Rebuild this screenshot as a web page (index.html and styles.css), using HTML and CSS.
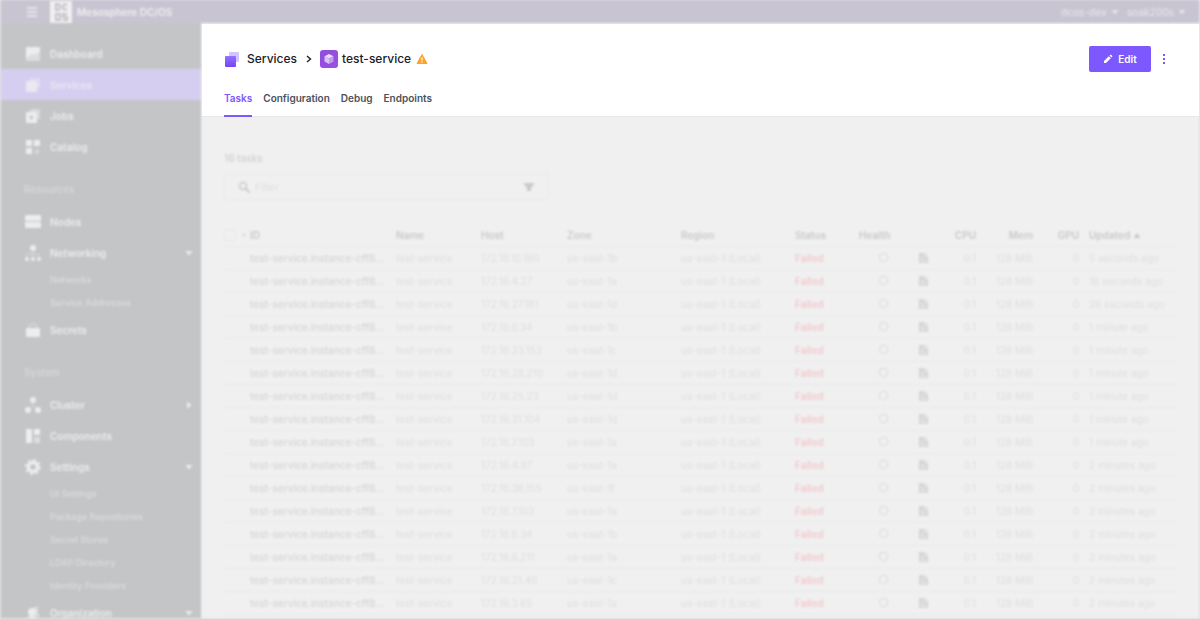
FILE: index.html
```html
<!DOCTYPE html>
<html lang="en">
<head>
<meta charset="utf-8">
<title>test-service - Mesosphere DC/OS</title>
<link rel="stylesheet" href="styles.css">
</head>
<body>
<svg class="sprite" aria-hidden="true">
  <symbol id="caret" viewBox="0 0 8 8"><path d="M0.500 2h7L4 6.500z"/></symbol>
  <symbol id="health" viewBox="0 0 12 12"><circle cx="6" cy="6" r="4.500" fill="none" stroke="currentColor" stroke-width="1.300" stroke-dasharray="2.200 0.600"/></symbol>
  <symbol id="log" viewBox="0 0 12 12"><path fill-rule="evenodd" d="M1 1h6v4h4v7H1zM3 6v1h3V6zM3 9v1h6V9z"/><path d="M8 1l3 3H8z"/></symbol>
  <symbol id="services" viewBox="0 0 16 16"><path opacity=".5" d="M5 1h10v10h-3V4H5z"/><rect x="1" y="4" width="11" height="11" rx="1"/></symbol>
</svg>
<div class="page">
  <div class="backdrop">
    <div class="topbar">
      <button class="menu" aria-label="Menu"><svg width="10" height="12" viewBox="0 0 10 12"><path d="M0 1h10v2H0zM0 5h10v2H0zM0 9h10v2H0z"/></svg></button>
      <svg class="logo" width="22" height="22" viewBox="0 0 22 22"><rect width="22" height="22" fill="#f0f0f0"/><g fill="none" stroke="#c4c1ca" stroke-width="2"><path d="M6 3h2q2 0 2 3t-2 3H6zM17 4q-4-2-4 2t4 2M6 13h4v6H6zM17 13h-4v3h4v3h-4"/></g></svg>
      <span class="brand">Mesosphere DC/OS</span>
      <button class="account">dcos-dev <svg class="caret"><use href="#caret"/></svg></button>
      <button class="account">soak200s <svg class="caret"><use href="#caret"/></svg></button>
    </div>
    <div class="shell">
      <nav class="sidebar">
        <a class="item" href="#"><svg class="icon" viewBox="0 0 16 16"><path d="M1 1h14v5L10 9 7 8 1 13z"/><path opacity=".6" d="M1 13l6-5 3 1 5-3v9H1z"/></svg>Dashboard</a>
        <a class="item active" href="#"><svg class="icon"><use href="#services"/></svg>Services</a>
        <a class="item" href="#"><svg class="icon" viewBox="0 0 16 16"><path opacity=".5" d="M5 1h10v10h-3V4H5z"/><path fill-rule="evenodd" d="M1 4h11v11H1zM5 7v5l4-2.500z"/></svg>Jobs</a>
        <a class="item" href="#"><svg class="icon" viewBox="0 0 16 16"><path d="M1 1h6v6H1zM9 1h6v6H9zM1 9h6v6H1z"/><path opacity=".6" d="M11 10h2v2h2v1h-2v2h-2v-2H9v-1h2z"/></svg>Catalog</a>
        <h2 class="group">Resources</h2>
        <a class="item" href="#"><svg class="icon" viewBox="0 0 16 16"><rect y="1" width="16" height="6" rx="1"/><rect y="8" width="16" height="6" rx="1"/></svg>Nodes</a>
        <a class="item" href="#"><svg class="icon" viewBox="0 0 16 16"><circle cx="8" cy="3" r="3"/><circle cx="2" cy="14" r="2"/><circle cx="8" cy="14" r="2"/><circle cx="14" cy="14" r="2"/><path opacity=".5" fill="none" stroke="currentColor" d="M8 5v8M2 13V9h12v4"/></svg>Networking<svg class="caret"><use href="#caret"/></svg></a>
        <a class="sub" href="#">Networks</a>
        <a class="sub" href="#">Service Addresses</a>
        <a class="item" href="#"><svg class="icon" viewBox="0 0 16 16"><rect x="1" y="6" width="14" height="9" rx="1"/><path opacity=".5" fill="none" stroke="currentColor" stroke-width="1.500" d="M4 6q0-4 4-4t4 4"/></svg>Secrets</a>
        <h2 class="group">System</h2>
        <a class="item" href="#"><svg class="icon" viewBox="0 0 16 16"><circle cx="8" cy="3" r="3"/><circle cx="3" cy="13" r="3"/><circle cx="13" cy="13" r="3"/><path opacity=".5" fill="none" stroke="currentColor" d="M8 4v5l-5 4M8 9l5 4"/></svg>Cluster<svg class="caret closed"><use href="#caret"/></svg></a>
        <a class="item" href="#"><svg class="icon" viewBox="0 0 16 16"><path d="M1 1h6v14H1zM9 1h6v6H9z"/><path opacity=".6" d="M9 9h6v6H9z"/></svg>Components</a>
        <a class="item" href="#"><svg class="icon" viewBox="0 0 16 16"><circle cx="8" cy="8" r="4.500" fill="none" stroke="currentColor" stroke-width="3.500"/><circle cx="8" cy="8" r="7" fill="none" stroke="currentColor" stroke-width="2" stroke-dasharray="2.750 2.750"/></svg>Settings<svg class="caret"><use href="#caret"/></svg></a>
        <a class="sub" href="#">UI Settings</a>
        <a class="sub" href="#">Package Repositories</a>
        <a class="sub" href="#">Secret Stores</a>
        <a class="sub" href="#">LDAP Directory</a>
        <a class="sub" href="#">Identity Providers</a>
        <a class="item" href="#"><svg class="icon" viewBox="0 0 16 16"><circle cx="7" cy="7" r="4"/><path d="M1 16q0-5 6-5t6 5z"/><path opacity=".6" d="M8 3l5-2v7l2 4h-4z"/></svg>Organization<svg class="caret"><use href="#caret"/></svg></a>
      </nav>
      <main class="content">
        <div class="count">16 tasks</div>
        <label class="filter">
          <svg width="12" height="12" viewBox="0 0 12 12"><circle cx="5" cy="5" r="3.500" fill="none" stroke="currentColor" stroke-width="1.500"/><path stroke="currentColor" stroke-width="2" d="M7.500 7.500l4 4"/></svg>
          <input type="text" placeholder="Filter" aria-label="Filter">
          <svg width="12" height="10" viewBox="0 0 12 10"><path d="M1 1h10v1L8 6v3H4V6L1 2z"/></svg>
        </label>
        <table class="tasks">
          <colgroup><col class="c-check"><col class="c-id"><col class="c-name"><col class="c-host"><col class="c-zone"><col class="c-region"><col class="c-status"><col class="c-health"><col class="c-log"><col class="c-cpu"><col class="c-mem"><col class="c-gpu"><col></colgroup>
          <thead><tr><th><span class="select"><input type="checkbox" aria-label="Select all tasks"><svg width="4" height="4" viewBox="0 0 8 8"><use href="#caret"/></svg></span></th><th>ID</th><th>Name</th><th>Host</th><th>Zone</th><th>Region</th><th>Status</th><th>Health</th><th></th><th>CPU</th><th>Mem</th><th>GPU</th><th>Updated <svg class="sort" viewBox="0 0 8 8"><path d="M0.500 7h7L4 2z"/></svg></th></tr></thead>
          <tbody>
            <tr><td></td><td>test-service.instance-cff8...</td><td>test-service</td><td>172.16.10.180</td><td>us-east-1b</td><td>us-east-1 (Local)</td><td>Failed</td><td><svg><use href="#health"/></svg></td><td><svg><use href="#log"/></svg></td><td>0.1</td><td>128 MiB</td><td>0</td><td>5 seconds ago</td></tr>
            <tr><td></td><td>test-service.instance-cff8...</td><td>test-service</td><td>172.16.4.27</td><td>us-east-1a</td><td>us-east-1 (Local)</td><td>Failed</td><td><svg><use href="#health"/></svg></td><td><svg><use href="#log"/></svg></td><td>0.1</td><td>128 MiB</td><td>0</td><td>16 seconds ago</td></tr>
            <tr><td></td><td>test-service.instance-cff8...</td><td>test-service</td><td>172.16.27.181</td><td>us-east-1d</td><td>us-east-1 (Local)</td><td>Failed</td><td><svg><use href="#health"/></svg></td><td><svg><use href="#log"/></svg></td><td>0.1</td><td>128 MiB</td><td>0</td><td>26 seconds ago</td></tr>
            <tr><td></td><td>test-service.instance-cff8...</td><td>test-service</td><td>172.16.6.34</td><td>us-east-1b</td><td>us-east-1 (Local)</td><td>Failed</td><td><svg><use href="#health"/></svg></td><td><svg><use href="#log"/></svg></td><td>0.1</td><td>128 MiB</td><td>0</td><td>1 minute ago</td></tr>
            <tr><td></td><td>test-service.instance-cff8...</td><td>test-service</td><td>172.16.23.153</td><td>us-east-1c</td><td>us-east-1 (Local)</td><td>Failed</td><td><svg><use href="#health"/></svg></td><td><svg><use href="#log"/></svg></td><td>0.1</td><td>128 MiB</td><td>0</td><td>1 minute ago</td></tr>
            <tr><td></td><td>test-service.instance-cff8...</td><td>test-service</td><td>172.16.26.210</td><td>us-east-1d</td><td>us-east-1 (Local)</td><td>Failed</td><td><svg><use href="#health"/></svg></td><td><svg><use href="#log"/></svg></td><td>0.1</td><td>128 MiB</td><td>0</td><td>1 minute ago</td></tr>
            <tr><td></td><td>test-service.instance-cff8...</td><td>test-service</td><td>172.16.25.23</td><td>us-east-1d</td><td>us-east-1 (Local)</td><td>Failed</td><td><svg><use href="#health"/></svg></td><td><svg><use href="#log"/></svg></td><td>0.1</td><td>128 MiB</td><td>0</td><td>1 minute ago</td></tr>
            <tr><td></td><td>test-service.instance-cff8...</td><td>test-service</td><td>172.16.31.104</td><td>us-east-1d</td><td>us-east-1 (Local)</td><td>Failed</td><td><svg><use href="#health"/></svg></td><td><svg><use href="#log"/></svg></td><td>0.1</td><td>128 MiB</td><td>0</td><td>1 minute ago</td></tr>
            <tr><td></td><td>test-service.instance-cff8...</td><td>test-service</td><td>172.16.7.103</td><td>us-east-1a</td><td>us-east-1 (Local)</td><td>Failed</td><td><svg><use href="#health"/></svg></td><td><svg><use href="#log"/></svg></td><td>0.1</td><td>128 MiB</td><td>0</td><td>1 minute ago</td></tr>
            <tr><td></td><td>test-service.instance-cff8...</td><td>test-service</td><td>172.16.4.87</td><td>us-east-1a</td><td>us-east-1 (Local)</td><td>Failed</td><td><svg><use href="#health"/></svg></td><td><svg><use href="#log"/></svg></td><td>0.1</td><td>128 MiB</td><td>0</td><td>2 minutes ago</td></tr>
            <tr><td></td><td>test-service.instance-cff8...</td><td>test-service</td><td>172.16.38.155</td><td>us-east-1f</td><td>us-east-1 (Local)</td><td>Failed</td><td><svg><use href="#health"/></svg></td><td><svg><use href="#log"/></svg></td><td>0.1</td><td>128 MiB</td><td>0</td><td>2 minutes ago</td></tr>
            <tr><td></td><td>test-service.instance-cff8...</td><td>test-service</td><td>172.16.7.103</td><td>us-east-1a</td><td>us-east-1 (Local)</td><td>Failed</td><td><svg><use href="#health"/></svg></td><td><svg><use href="#log"/></svg></td><td>0.1</td><td>128 MiB</td><td>0</td><td>2 minutes ago</td></tr>
            <tr><td></td><td>test-service.instance-cff8...</td><td>test-service</td><td>172.16.6.34</td><td>us-east-1b</td><td>us-east-1 (Local)</td><td>Failed</td><td><svg><use href="#health"/></svg></td><td><svg><use href="#log"/></svg></td><td>0.1</td><td>128 MiB</td><td>0</td><td>2 minutes ago</td></tr>
            <tr><td></td><td>test-service.instance-cff8...</td><td>test-service</td><td>172.16.6.211</td><td>us-east-1a</td><td>us-east-1 (Local)</td><td>Failed</td><td><svg><use href="#health"/></svg></td><td><svg><use href="#log"/></svg></td><td>0.1</td><td>128 MiB</td><td>0</td><td>2 minutes ago</td></tr>
            <tr><td></td><td>test-service.instance-cff8...</td><td>test-service</td><td>172.16.21.46</td><td>us-east-1c</td><td>us-east-1 (Local)</td><td>Failed</td><td><svg><use href="#health"/></svg></td><td><svg><use href="#log"/></svg></td><td>0.1</td><td>128 MiB</td><td>0</td><td>2 minutes ago</td></tr>
            <tr><td></td><td>test-service.instance-cff8...</td><td>test-service</td><td>172.16.3.65</td><td>us-east-1a</td><td>us-east-1 (Local)</td><td>Failed</td><td><svg><use href="#health"/></svg></td><td><svg><use href="#log"/></svg></td><td>0.1</td><td>128 MiB</td><td>0</td><td>2 minutes ago</td></tr>
          </tbody>
        </table>
      </main>
    </div>
  </div>
  <header class="header">
    <div class="title-row">
      <svg width="16" height="16" viewBox="0 0 16 16"><defs><linearGradient id="g" x1="0" y1="0" x2="0" y2="1"><stop offset="0" stop-color="#9471ff"/><stop offset="1" stop-color="#7545f5"/></linearGradient></defs><rect x="5" y="1" width="10" height="10" rx="1" fill="#d3c5ff"/><rect x="1" y="5" width="11" height="11" rx="1" fill="url(#g)"/></svg>
      <a class="crumb" href="#">Services</a>
      <svg class="chevron" width="6" height="8" viewBox="0 0 6 8"><path d="M1 1l3.500 3L1 7" fill="none" stroke="#1b2029" stroke-width="1.400"/></svg>
      <svg class="app-icon" width="18" height="18" viewBox="0 0 18 18"><defs><linearGradient id="b" x1="0" y1="0" x2="1" y2="1"><stop offset="0" stop-color="#8f4be0"/><stop offset="1" stop-color="#9b50e0"/></linearGradient></defs><rect width="18" height="18" rx="3" fill="url(#b)"/><path d="M9 4l4.500 2.200L9 8.500 4.500 6.200z" fill="#eadcfa"/><path d="M4.500 6.200L9 8.500V14l-4.500-2.500z" fill="#d9bff5"/><path d="M13.500 6.200L9 8.500V14l4.500-2.500z" fill="#c29cee"/></svg>
      <a class="crumb service" href="#">test-service</a>
      <svg width="12" height="12" viewBox="0 0 12 12"><path d="M6 1.500l5 9H1z" fill="#ffa22d" stroke="#ffa22d" stroke-linejoin="round"/><path d="M5.400 4.500h1.200v3H5.400zM5.400 8.500h1.200v1.200H5.400z" fill="#fff"/></svg>
      <button class="edit"><svg width="10" height="10" viewBox="0 0 10 10"><path fill="#fff" d="M1 7l4.800-4.800 2 2L3 9H1zM6.500 1.500l.8-.7q.4-.3.800 0l1.100 1.100q.3.400 0 .8l-.7.800z"/></svg>Edit</button>
      <button class="more" aria-label="More actions"><svg width="4" height="10" viewBox="0 0 4 10"><path fill="#7d58ff" d="M1 0h2v2H1zM1 4h2v2H1zM1 8h2v2H1z"/></svg></button>
    </div>
    <nav class="tabs">
      <a class="tab current" href="#">Tasks</a>
      <a class="tab" href="#">Configuration</a>
      <a class="tab" href="#">Debug</a>
      <a class="tab" href="#">Endpoints</a>
    </nav>
  </header>
</div>
</body>
</html>
```

FILE: styles.css
```css
* { box-sizing: border-box; }

body {
  margin: 0;
  background: #e2e2e5;
  font-family: Inter, "Liberation Sans", sans-serif;
  font-size: 10px;
  line-height: 16px;
}

a { color: inherit; text-decoration: none; }
button { border: 0; padding: 0; background: none; color: inherit; font: inherit; }
svg { flex: none; fill: currentColor; }
.sprite { position: absolute; width: 0; height: 0; }

.page { display: grid; height: 100vh; overflow: hidden; }
.backdrop, .header { grid-area: 1 / 1; }

/* Dimmed, out-of-focus application behind the header */
.backdrop {
  display: flex;
  flex-direction: column;
  min-height: 0;
  margin: 0 1px 1px;
  overflow: hidden;
  background: #f0f0f0;
  filter: blur(1px);
}

.topbar {
  display: flex;
  flex: none;
  align-items: center;
  height: 23px;
  padding: 0 13px 0 26px;
  background: #c8c4d2;
  color: #e6e4ea;
}
.menu { display: flex; }
.logo { margin-left: 13px; }
.brand { margin: 0 auto 0 5px; color: #f0f0f0; font-weight: 600; }
.account { display: flex; align-items: center; gap: 4px; margin-left: 8px; font-weight: 500; }
.caret { width: 8px; height: 8px; }

.shell { display: flex; flex: 1; min-height: 0; }

.sidebar {
  flex: none;
  width: 200px;
  padding-top: 15px;
  overflow: hidden;
  background: #c4c5c7;
  color: #ededee;
}
.item { display: flex; align-items: center; height: 31px; padding: 0 8px 0 24px; font-weight: 600; }
.item .icon { width: 16px; height: 16px; margin-right: 9px; }
.item .caret { margin-left: auto; }
.item .closed { transform: rotate(-90deg); }
.active { background: #d6cef0; color: #ebe8f2; }
.group { margin: 0; padding: 12px 23px 0; height: 44px; color: #d8d9da; font-size: 10px; font-weight: 500; line-height: 31px; }
.sub { display: block; padding-left: 49px; color: #dcddde; font-size: 9px; font-weight: 500; line-height: 23px; }

.content { flex: 1; min-width: 0; padding: 127px 22px 0 23px; color: #dedede; }
.count { color: #cfcfcf; font-weight: 500; }
.filter {
  display: flex;
  align-items: center;
  width: 325px;
  height: 27px;
  margin-top: 7px;
  padding: 0 13px;
  border: 1px solid #e9e9e9;
  border-radius: 2px;
  color: #cacaca;
}
.filter input { flex: 1; min-width: 0; border: 0; padding: 0 5px; background: none; font: inherit; }
.filter input::placeholder { color: #dedede; opacity: 1; }

.tasks { width: 100%; margin-top: 24px; border-collapse: collapse; table-layout: fixed; white-space: nowrap; }
.tasks tr { border-bottom: 1px solid #e9e9e9; }
.tasks th, .tasks td { height: 23px; padding: 0; font-weight: 400; line-height: 12px; text-align: left; }
.tasks th { height: 22px; color: #c9c9c9; font-weight: 600; }
.tasks tr > :nth-child(n+10):nth-child(-n+12) { text-align: right; }
.tasks tr > :nth-child(13) { padding-left: 10px; }
.tasks td:nth-child(2) { color: #d5d5d5; font-weight: 500; }
.tasks td:nth-child(7) { color: #f3c9cd; font-weight: 600; }
.tasks td:nth-child(8) { text-align: center; color: #dadada; }
.tasks td:nth-child(9) { text-align: center; color: #d6d6d6; }
.tasks td svg { display: block; width: 11px; height: 11px; margin: 0 auto; }
.select { display: flex; align-items: center; gap: 6px; }
.select input { appearance: none; width: 12px; height: 12px; margin: 0; border: 1px solid #e7e7e7; border-radius: 2px; }
.sort { width: 8px; height: 8px; }

.c-check { width: 26px; }
.c-id { width: 146px; }
.c-name { width: 85px; }
.c-host { width: 86px; }
.c-zone { width: 114px; }
.c-region { width: 114px; }
.c-status { width: 64px; }
.c-health { width: 48px; }
.c-log { width: 32px; }
.c-cpu { width: 37px; }
.c-mem { width: 57px; }
.c-gpu { width: 46px; }

.header {
  z-index: 1;
  align-self: start;
  margin: 24px 1px 0 202px;
  padding: 22px 33px 0 22px;
  background: #fff;
  border-bottom: 1px solid #e8e8ea;
}
.title-row { display: flex; align-items: center; height: 26px; color: #1b2029; }
.crumb { margin-left: 7px; font-size: 12px; font-weight: 500; }
.chevron { margin: 0 8px 0 9px; }
.service { margin: 0 5px 0 4px; }
.edit {
  display: flex;
  align-items: center;
  justify-content: center;
  gap: 5px;
  width: 62px;
  height: 26px;
  margin-left: auto;
  border-radius: 2px;
  background: #7d58ff;
  color: #fff;
  font-weight: 600;
}
.more { display: flex; margin-left: 11px; }
.tabs { display: flex; gap: 11px; margin: 18px 0 -1px; color: #4c515b; font-weight: 600; }
.tab { padding-bottom: 9px; border-bottom: 2px solid transparent; }
.current { border-color: #7d58ff; color: #7d58ff; }
```
